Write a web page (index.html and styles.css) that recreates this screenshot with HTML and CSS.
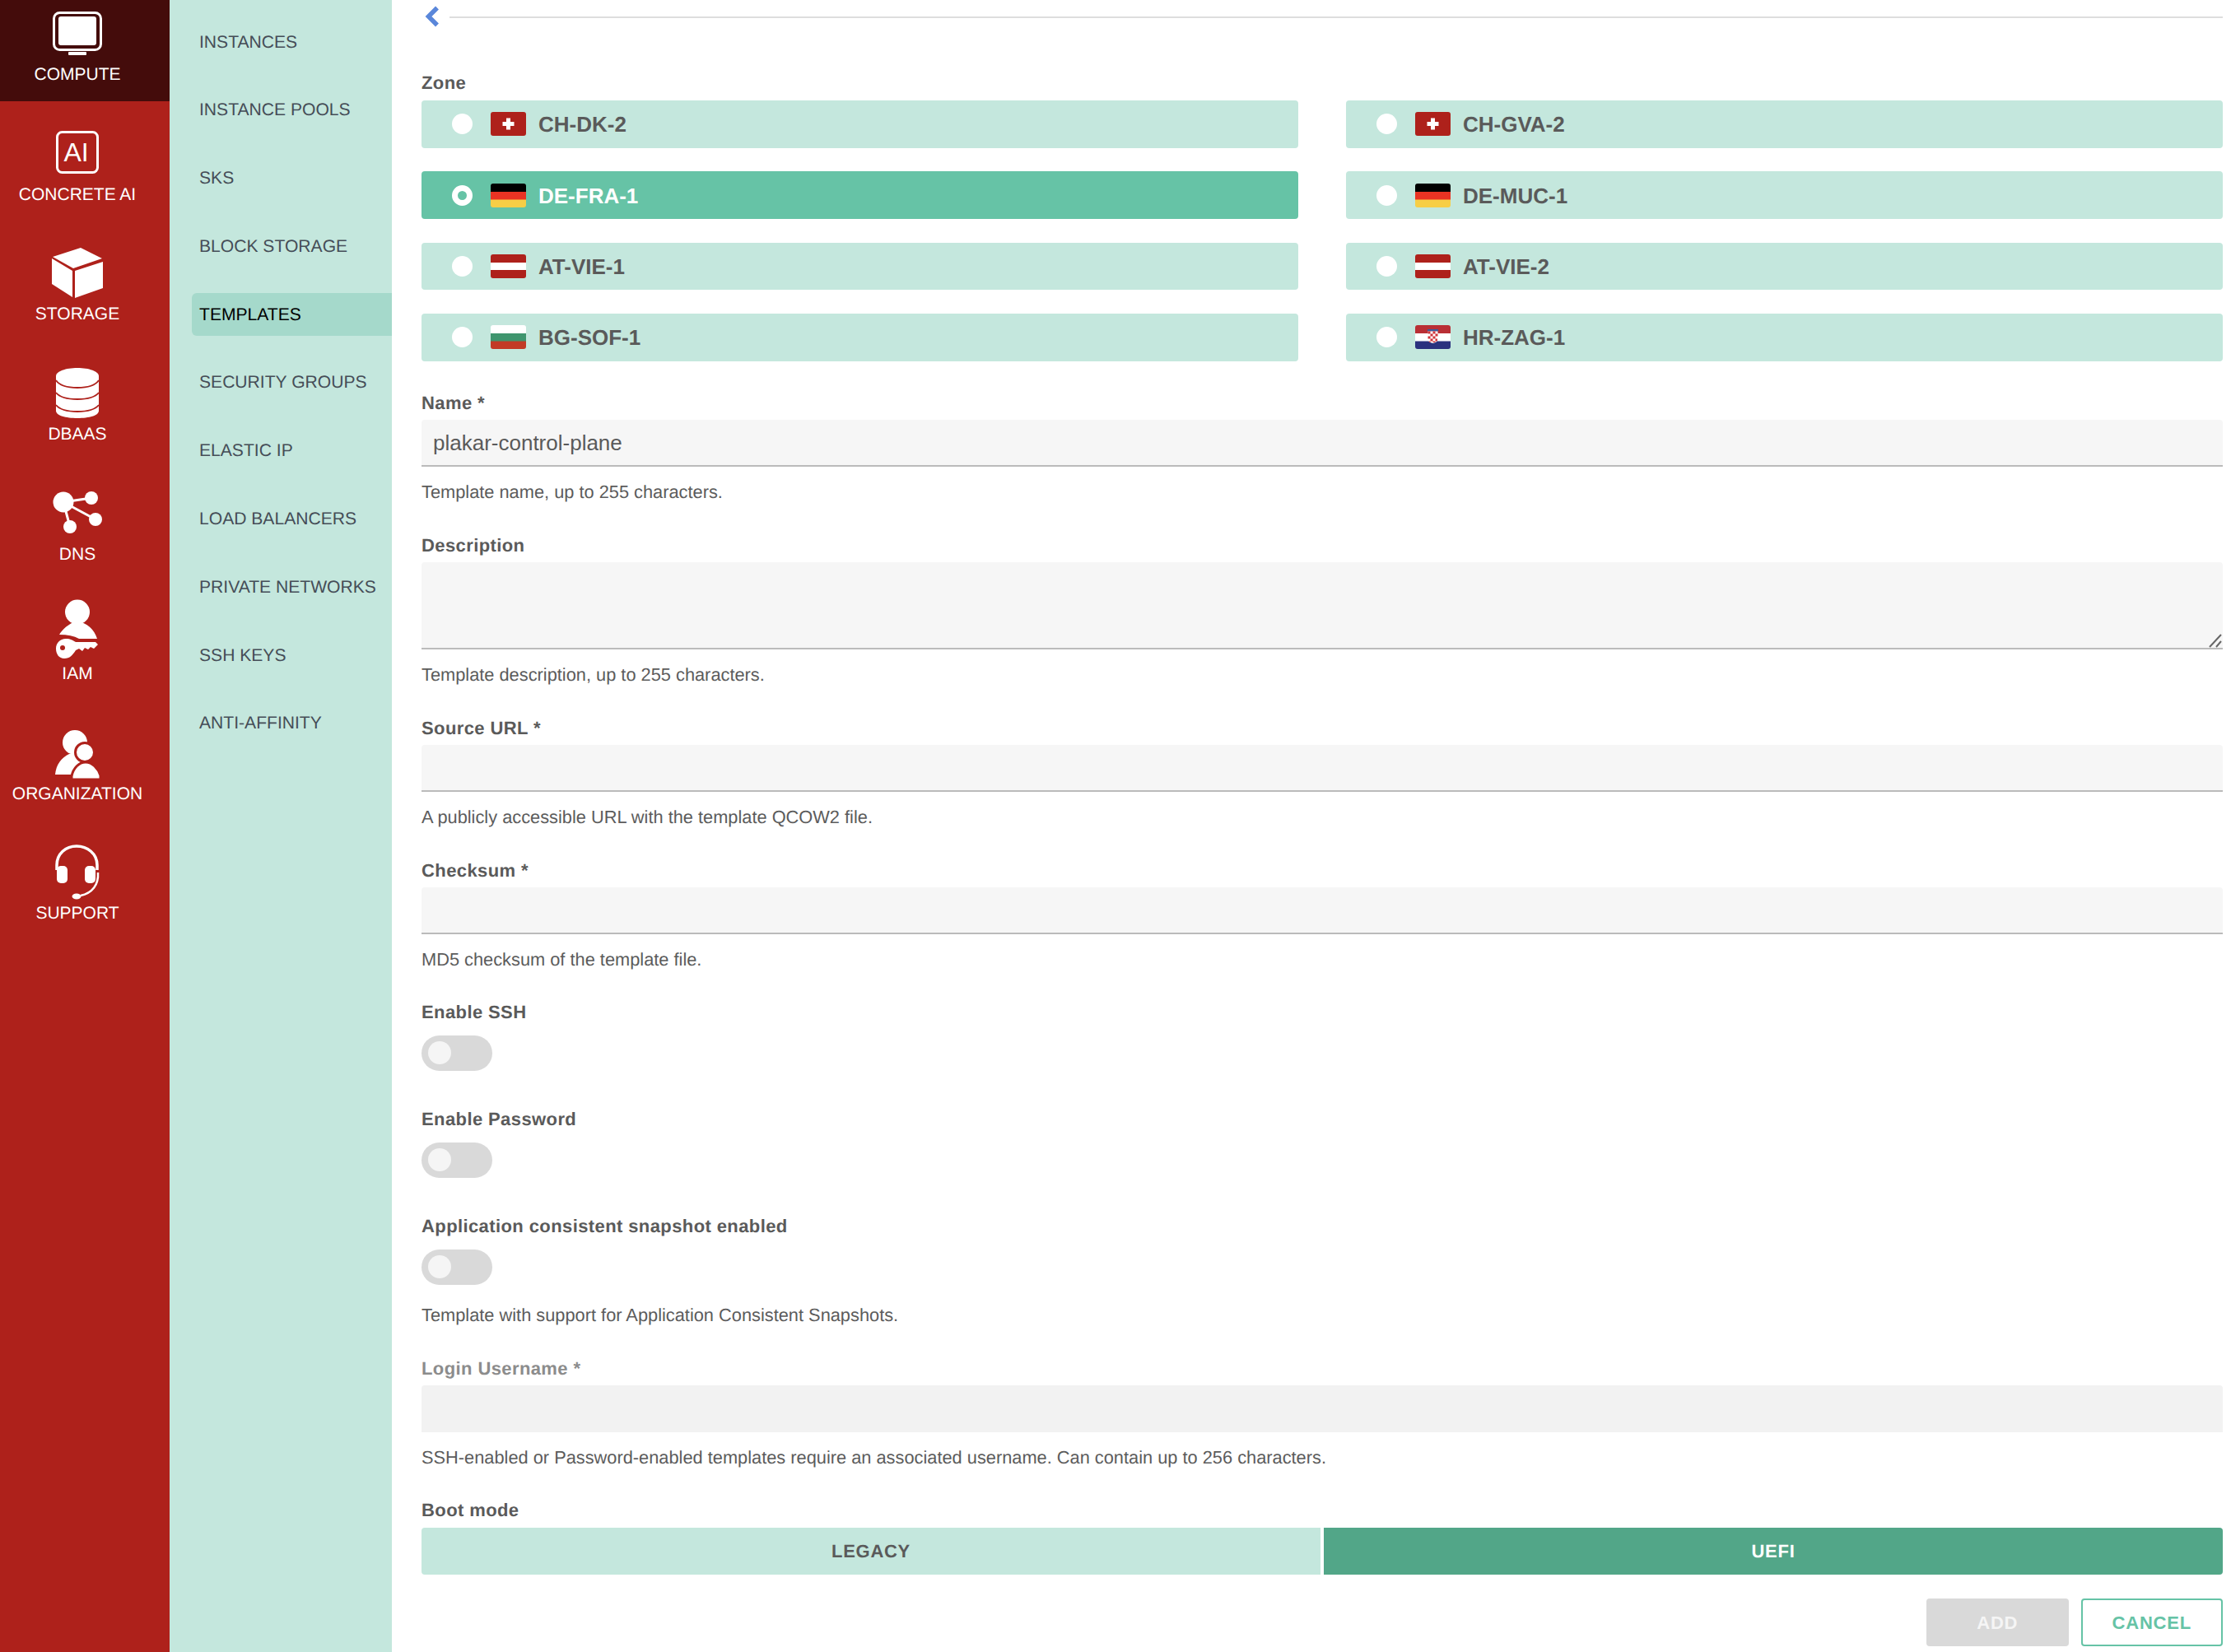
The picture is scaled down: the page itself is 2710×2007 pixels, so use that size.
FILE: index.html
```html
<!DOCTYPE html>
<html lang="en">
<head>
<meta charset="utf-8">
<title>Add template</title>
<link rel="stylesheet" href="styles.css">
</head>
<body>
<div class="shell">
  <nav class="sidebar">
    <a class="side-item side-item-first">
      <svg class="side-icon" viewBox="0 0 72 72"><rect x="7.500" y="13.500" width="57" height="45" rx="7" fill="none" stroke="#fff" stroke-width="3"/><rect x="13" y="18" width="46" height="35" rx="3" fill="#fff"/><rect x="25" y="61" width="22" height="4" rx="1" fill="#fff"/></svg>
      <span>COMPUTE</span>
    </a>
    <a class="side-item">
      <svg class="side-icon" viewBox="0 0 72 72"><rect x="11.500" y="13.500" width="49" height="49" rx="6" fill="none" stroke="#fff" stroke-width="3"/><text class="ai-text" x="19.500" y="49">AI</text></svg>
      <span>CONCRETE AI</span>
    </a>
    <a class="side-item">
      <svg class="side-icon" viewBox="0 0 72 72"><path fill="#fff" d="M40 8L66 21L31 33L6 19Z M33 36L67 25V57L33 69Z M5 21L30 36V68L5 52Z"/></svg>
      <span>STORAGE</span>
    </a>
    <a class="side-item">
      <svg class="side-icon" viewBox="0 0 72 72"><path fill="#fff" d="M10 18C10 12 22 8 36 8S62 12 62 18V60C62 66 50 69 36 69S10 66 10 60Z"/><path fill="none" stroke="#ae211b" stroke-width="1.800" d="M10 23C14 29 24 32 36 32S58 29 62 23M10 38C14 43 24 46 36 46S58 43 62 38M10 53C14 58 24 61 36 61S58 58 62 53"/></svg>
      <span>DBAAS</span>
    </a>
    <a class="side-item">
      <svg class="side-icon" viewBox="0 0 72 72"><g fill="#fff"><ellipse cx="19" cy="26" rx="12.500" ry="12.500"/><ellipse cx="53" cy="21" rx="8" ry="8"/><ellipse cx="58" cy="47" rx="8" ry="8"/><ellipse cx="27" cy="56" rx="8" ry="8"/></g><path fill="none" stroke="#fff" stroke-width="3" d="M19 26L53 21M19 26L58 47M19 26L27 56"/></svg>
      <span>DNS</span>
    </a>
    <a class="side-item">
      <svg class="side-icon" viewBox="0 0 72 72"><circle cx="36" cy="13.500" r="15" fill="#fff"/><path fill="#fff" d="M14 41C18 34 25 29 31 26Q36 30 41 26C50 29 57 36 60 46H38Q29 41 14 41Z"/><path fill="#fff" d="M10 58C10 51 15 46 22 46C28 46 30 48 34 50H58L61 53L56 58L52 56L49 59L45 57L42 61L38 58L34 60C30 66 27 70 20 70C14 70 10 65 10 58Z"/><circle cx="18" cy="57" r="3" fill="#ae211b"/></svg>
      <span>IAM</span>
    </a>
    <a class="side-item">
      <svg class="side-icon" viewBox="0 0 72 72"><circle cx="33" cy="27" r="15" fill="#fff"/><path fill="#fff" d="M9 66C10 54 17 45 26 41H44V66Z"/><path fill="#fff" stroke="#ae211b" stroke-width="3" d="M29 68C31 58 38 51 46 51C54 51 61 58 64 67V72H29Z"/><circle cx="45" cy="39" r="11.500" fill="#fff" stroke="#ae211b" stroke-width="3"/></svg>
      <span>ORGANIZATION</span>
    </a>
    <a class="side-item">
      <svg class="side-icon" viewBox="0 0 72 72"><path fill="none" stroke="#fff" stroke-width="3.500" d="M11 36V30C11 16 22 7 35 7S60 16 60 30V36"/><rect x="11" y="31" width="13" height="21" rx="5" fill="#fff"/><rect x="45" y="31" width="13" height="21" rx="5" fill="#fff"/><path fill="none" stroke="#fff" stroke-width="2.500" d="M61 39C62 54 54 64 40 67"/><ellipse cx="35" cy="68" rx="5.500" ry="3.500" fill="#fff"/></svg>
      <span>SUPPORT</span>
    </a>
  </nav>

  <nav class="subnav">
    <a class="sub-item">INSTANCES</a>
    <a class="sub-item">INSTANCE POOLS</a>
    <a class="sub-item">SKS</a>
    <a class="sub-item">BLOCK STORAGE</a>
    <a class="sub-item sub-item-active">TEMPLATES</a>
    <a class="sub-item">SECURITY GROUPS</a>
    <a class="sub-item">ELASTIC IP</a>
    <a class="sub-item">LOAD BALANCERS</a>
    <a class="sub-item">PRIVATE NETWORKS</a>
    <a class="sub-item">SSH KEYS</a>
    <a class="sub-item">ANTI-AFFINITY</a>
  </nav>

  <main class="main">
    <div class="back-row">
      <svg class="back-icon" viewBox="0 0 18 26"><path fill="none" stroke="#5a87da" stroke-width="5.500" d="M16 2.500L5.500 13L16 23.500"/></svg>
      <div class="back-line"></div>
    </div>

    <div class="label zone-label">Zone</div>
    <div class="zones">
      <div class="zone"><span class="radio"></span>
        <svg class="flag" viewBox="0 0 43 29"><rect width="43" height="29" fill="#ae211b"/><path fill="#fff" d="M19 7.500h5V12h4.500v5H24v4.500h-5V17h-4.500v-5H19z"/></svg>
        <span class="zone-name">CH-DK-2</span></div>
      <div class="zone"><span class="radio"></span>
        <svg class="flag" viewBox="0 0 43 29"><rect width="43" height="29" fill="#ae211b"/><path fill="#fff" d="M19 7.500h5V12h4.500v5H24v4.500h-5V17h-4.500v-5H19z"/></svg>
        <span class="zone-name">CH-GVA-2</span></div>
      <div class="zone zone-selected"><span class="radio"></span>
        <svg class="flag" viewBox="0 0 43 29"><rect width="43" height="10" fill="#000"/><rect y="10" width="43" height="10" fill="#e93323"/><rect y="19.500" width="43" height="9.500" fill="#f7ce46"/></svg>
        <span class="zone-name">DE-FRA-1</span></div>
      <div class="zone"><span class="radio"></span>
        <svg class="flag" viewBox="0 0 43 29"><rect width="43" height="10" fill="#000"/><rect y="10" width="43" height="10" fill="#e93323"/><rect y="19.500" width="43" height="9.500" fill="#f7ce46"/></svg>
        <span class="zone-name">DE-MUC-1</span></div>
      <div class="zone"><span class="radio"></span>
        <svg class="flag" viewBox="0 0 43 29"><rect width="43" height="29" fill="#ae211b"/><rect y="10" width="43" height="9" fill="#fff"/></svg>
        <span class="zone-name">AT-VIE-1</span></div>
      <div class="zone"><span class="radio"></span>
        <svg class="flag" viewBox="0 0 43 29"><rect width="43" height="29" fill="#ae211b"/><rect y="10" width="43" height="9" fill="#fff"/></svg>
        <span class="zone-name">AT-VIE-2</span></div>
      <div class="zone"><span class="radio"></span>
        <svg class="flag" viewBox="0 0 43 29"><rect width="43" height="10" fill="#fff"/><rect y="10" width="43" height="10" fill="#3f956e"/><rect y="19.500" width="43" height="9.500" fill="#c23a26"/></svg>
        <span class="zone-name">BG-SOF-1</span></div>
      <div class="zone"><span class="radio"></span>
        <svg class="flag" viewBox="0 0 43 29"><rect width="43" height="10" fill="#b92f35"/><rect y="10" width="43" height="10" fill="#fff"/><rect y="19.500" width="43" height="9.500" fill="#2a317e"/><rect x="15" y="5" width="13" height="2.500" fill="#3c5a9a"/><path fill="#fff" d="M15.500 7.500h12V17q0 4-6 5q-6-1-6-5z"/><path fill="#d0343a" d="M15.500 7.500h3v3h-3zM21.500 7.500h3v3h-3zM18.500 10.500h3v3h-3zM24.500 10.500h3v3h-3zM15.500 13.500h3v3h-3zM21.500 13.500h3v3h-3zM18.500 16.500h3v3h-3zM24.500 16.500h2.500v3h-2.500zM16.500 19.500h2v1.500h-1zM21.500 19.500h3v1.500h-3z"/></svg>
        <span class="zone-name">HR-ZAG-1</span></div>
    </div>

    <div class="field">
      <label class="label" for="f-name">Name *</label>
      <input class="input" id="f-name" type="text" value="plakar-control-plane">
      <p class="hint">Template name, up to 255 characters.</p>
    </div>
    <div class="field">
      <label class="label" for="f-desc">Description</label>
      <div class="textarea-wrap">
        <textarea class="input textarea" id="f-desc"></textarea>
        <svg class="grip" viewBox="0 0 16 17"><path fill="none" stroke="#666" stroke-width="2" d="M1 16L15 1M9 16L15 9"/></svg>
      </div>
      <p class="hint">Template description, up to 255 characters.</p>
    </div>
    <div class="field">
      <label class="label" for="f-url">Source URL *</label>
      <input class="input" id="f-url" type="text">
      <p class="hint">A publicly accessible URL with the template QCOW2 file.</p>
    </div>
    <div class="field">
      <label class="label" for="f-sum">Checksum *</label>
      <input class="input" id="f-sum" type="text">
      <p class="hint">MD5 checksum of the template file.</p>
    </div>
    <div class="field field-toggle">
      <div class="label">Enable SSH</div>
      <div class="toggle"><span class="thumb"></span></div>
    </div>
    <div class="field field-toggle">
      <div class="label">Enable Password</div>
      <div class="toggle"><span class="thumb"></span></div>
    </div>
    <div class="field field-toggle">
      <div class="label">Application consistent snapshot enabled</div>
      <div class="toggle"><span class="thumb"></span></div>
      <p class="hint hint-toggle">Template with support for Application Consistent Snapshots.</p>
    </div>
    <div class="field">
      <label class="label label-disabled" for="f-user">Login Username *</label>
      <input class="input input-disabled" id="f-user" type="text" disabled>
      <p class="hint">SSH-enabled or Password-enabled templates require an associated username. Can contain up to 256 characters.</p>
    </div>
    <div class="field">
      <div class="label">Boot mode</div>
      <div class="segments">
        <div class="segment">LEGACY</div>
        <div class="segment segment-active">UEFI</div>
      </div>
    </div>
    <div class="actions">
      <button class="btn btn-add" type="button">ADD</button>
      <button class="btn btn-cancel" type="button">CANCEL</button>
    </div>
  </main>
</div>
</body>
</html>
```

FILE: styles.css
```css
* { box-sizing: border-box; }

html, body {
  margin: 0;
  height: 100%;
  overflow: hidden;
  background: #fff;
  font-family: "Liberation Sans", Arial, sans-serif;
  text-rendering: geometricPrecision;
}

.shell {
  display: flex;
  height: 2007px;
}

/* Main red sidebar */
.sidebar {
  flex: 0 0 206px;
  background: #ae211b;
  display: flex;
  flex-direction: column;
}

.side-item {
  flex: 0 0 145.600px;
  display: flex;
  flex-direction: column;
  align-items: center;
  justify-content: flex-end;
  padding: 0 18px 19.500px 0;
  color: #fff;
  font-size: 21px;
  line-height: 24px;
  white-space: nowrap;
}

.side-item-first {
  flex-basis: 122.800px;
  background: #440c0b;
}

.side-icon {
  display: block;
  width: 72px;
  height: 72px;
  margin-bottom: 5.500px;
  overflow: visible;
  flex: none;
}

.ai-text {
  font-family: "Liberation Sans", Arial, sans-serif;
  font-size: 32px;
  fill: #fff;
}

/* Secondary nav */
.subnav {
  flex: 0 0 270px;
  background: #c4e7dd;
  display: flex;
  flex-direction: column;
  gap: 30.800px;
  padding: 24.500px 0 0 27px;
}

.sub-item {
  height: 52px;
  display: flex;
  align-items: center;
  padding: 2px 0 0 9px;
  border-radius: 6px 0 0 6px;
  color: #454d57;
  font-size: 21.100px;
  white-space: nowrap;
}

.sub-item-active {
  background: #a5d9cb;
  color: #000;
}

/* Content */
.main {
  flex: 1;
  min-width: 0;
  padding: 0 10px 0 36px;
}

.back-row {
  height: 42px;
  display: flex;
  align-items: flex-start;
  gap: 13px;
}

.back-icon {
  width: 18px;
  height: 26px;
  margin: 7px 0 0 3px;
  flex: none;
}

.back-line {
  flex: 1;
  height: 2px;
  margin-top: 20px;
  background: #ddd;
}

.label {
  display: block;
  height: 26px;
  line-height: 27.500px;
  margin-bottom: 8.400px;
  color: #5a5a5a;
  font-size: 22px;
  font-weight: 700;
  letter-spacing: 0.4px;
}

.label-disabled { color: #8c8c8c; }

.zone-label {
  margin-top: 45px;
  margin-bottom: 9px;
}

.zones {
  display: grid;
  grid-template-columns: 1fr 1fr;
  column-gap: 58px;
  row-gap: 28.800px;
}

.zone {
  height: 57.600px;
  display: flex;
  align-items: center;
  padding-left: 37px;
  border-radius: 4px;
  background: #c4e7dd;
  color: #5a5a5a;
  font-size: 26px;
  font-weight: 700;
}

.zone-name { padding-top: 2px; }

.zone-selected {
  background: #66c3a6;
  color: #fff;
}

.radio {
  width: 25px;
  height: 25px;
  margin-right: 22px;
  border-radius: 50%;
  background: #fff;
  flex: none;
}

.zone-selected .radio {
  background: #66c3a6;
  border: 7px solid #fff;
}

.flag {
  display: block;
  width: 43px;
  height: 29px;
  margin-right: 15px;
  border-radius: 3px;
  flex: none;
}

.field { margin-top: 38.800px; }

.zones + .field { margin-top: 37.200px; }

.input {
  display: block;
  width: 100%;
  height: 56.600px;
  margin: 0;
  padding: 2px 14px 0;
  border: 0;
  border-bottom: 2px solid #bbb;
  border-radius: 4px 4px 0 0;
  outline: 0;
  background: #f6f6f6;
  color: #5a5a5a;
  font-family: inherit;
  font-size: 26px;
}

.textarea-wrap { position: relative; }

.textarea {
  height: 106px;
  resize: none;
}

.grip {
  position: absolute;
  right: 1px;
  bottom: 2px;
  width: 16px;
  height: 17px;
}

.input-disabled {
  background: #f2f2f2;
  border-bottom-color: #f2f2f2;
}

.hint {
  height: 26px;
  margin: 17px 0 0;
  line-height: 27.500px;
  color: #5c5c5c;
  font-size: 21.800px;
  white-space: nowrap;
}

.hint-toggle { margin-top: 23px; }

.field-toggle .label { margin-bottom: 15.400px; }

.field-toggle + .field-toggle { margin-top: 45.600px; }

.toggle {
  width: 86px;
  height: 43px;
  padding: 7.500px 8px;
  border-radius: 22px;
  background: #d9d9d9;
}

.thumb {
  display: block;
  width: 28px;
  height: 28px;
  border-radius: 50%;
  background: #f5f5f5;
}

.segments {
  display: flex;
  gap: 4px;
}

.segment {
  flex: 1;
  height: 57px;
  display: flex;
  align-items: center;
  justify-content: center;
  padding-top: 2px;
  background: #c4e7dd;
  border-radius: 4px 0 0 4px;
  color: #5a5a5a;
  font-size: 22px;
  font-weight: 700;
  letter-spacing: 0.7px;
}

.segment-active {
  background: #52a688;
  border-radius: 0 4px 4px 0;
  color: #fff;
}

.actions {
  display: flex;
  justify-content: flex-end;
  gap: 15px;
  margin-top: 29px;
}

.btn {
  width: 172.500px;
  height: 58px;
  padding: 2px 0 0;
  border-radius: 4px;
  font-family: inherit;
  font-size: 22px;
  font-weight: 700;
  letter-spacing: 0.8px;
}

.btn-add {
  border: 0;
  background: #d9d9d9;
  color: #f5f5f5;
}

.btn-cancel {
  border: 2px solid #66c3a6;
  background: #fff;
  color: #66c3a6;
}
```
